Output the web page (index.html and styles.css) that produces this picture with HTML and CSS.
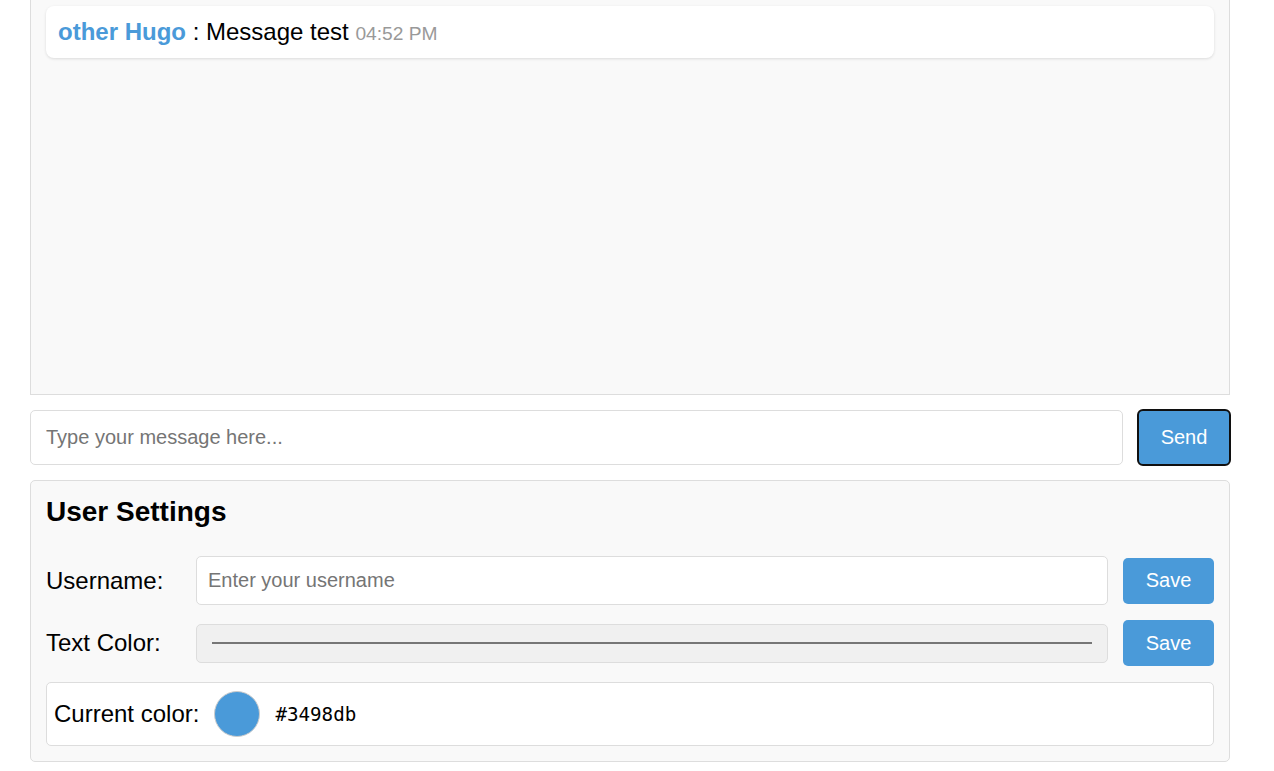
FILE: index.html
```html
<!DOCTYPE html>
<html lang="en">
<head>
<meta charset="utf-8">
<title>Chat</title>
<link rel="stylesheet" href="styles.css">
</head>
<body>
<div class="app">
  <div class="chat-box">
    <div class="message">
      <span class="author">other Hugo</span> : Message test <span class="time">04:52 PM</span>
    </div>
  </div>
  <div class="input-row">
    <input class="msg-input" type="text" placeholder="Type your message here...">
    <button class="send-btn">Send</button>
  </div>
  <div class="settings">
    <h3 class="settings-title">User Settings</h3>
    <div class="setting-row row-user">
      <label class="setting-label">Username:</label>
      <input class="text-field" type="text" placeholder="Enter your username">
      <button class="save-btn">Save</button>
    </div>
    <div class="setting-row row-color">
      <label class="setting-label">Text Color:</label>
      <div class="color-field"><div class="color-line"></div></div>
      <button class="save-btn">Save</button>
    </div>
    <div class="current-color">
      <span class="current-label">Current color:</span>
      <span class="swatch"></span>
      <code class="hex">#3498db</code>
    </div>
  </div>
</div>
</body>
</html>
```

FILE: styles.css
```css
html, body {
  margin: 0;
  padding: 0;
  background: #fff;
}
body {
  font-family: "Liberation Sans", Arial, sans-serif;
  font-size: 24px;
  color: #000;
  overflow: hidden;
}
.app {
  width: 1200px;
  margin: -10px 0 0 30px;
}
.chat-box {
  box-sizing: border-box;
  height: 405px;
  background: #f9f9f9;
  border: 1px solid #ddd;
  padding: 15px;
}
.message {
  background: #fff;
  border-radius: 8px;
  padding: 12px;
  height: 52px;
  box-sizing: border-box;
  line-height: 28px;
  box-shadow: 0 1px 3px rgba(0, 0, 0, 0.12);
}
.author {
  color: #4a9ad9;
  font-weight: bold;
}
.time {
  color: #999;
  font-size: 19.2px;
  line-height: 1;
}
.input-row {
  display: flex;
  align-items: center;
  gap: 14px;
  height: 57px;
  margin: 14px -1px 14px 0;
}
.msg-input {
  flex: 1;
  box-sizing: border-box;
  height: 55px;
  border: 1px solid #ddd;
  border-radius: 5px;
  padding: 0 15px;
  font-family: inherit;
  font-size: 20px;
  background: #fff;
  outline: none;
}
.msg-input::placeholder, .text-field::placeholder {
  color: #757575;
}
.send-btn {
  box-sizing: border-box;
  width: 94px;
  height: 57px;
  border: 2px solid #101010;
  border-radius: 6px;
  background: #4a9ad9;
  color: #fff;
  font-family: inherit;
  font-size: 20px;
  padding: 0;
}
.settings {
  box-sizing: border-box;
  background: #f9f9f9;
  border: 1px solid #ddd;
  border-radius: 5px;
  padding: 15px;
}
.settings-title {
  margin: 0 0 28px;
  font-size: 28px;
  font-weight: bold;
  line-height: 32px;
}
.setting-row {
  display: flex;
  align-items: center;
  gap: 15px;
}
.row-user {
  height: 49px;
  margin-bottom: 15px;
}
.row-color {
  height: 46px;
  margin-bottom: 16px;
}
.setting-label {
  width: 135px;
  flex: none;
}
.text-field {
  flex: 1;
  box-sizing: border-box;
  height: 49px;
  border: 1px solid #ddd;
  border-radius: 5px;
  padding: 0 11px;
  font-family: inherit;
  font-size: 20px;
  background: #fff;
  outline: none;
}
.color-field {
  flex: 1;
  box-sizing: border-box;
  height: 39px;
  border: 1px solid #ddd;
  border-radius: 5px;
  background: #f0f0f0;
  padding: 0 15px;
  display: flex;
  align-items: center;
}
.color-line {
  flex: 1;
  height: 2px;
  background: #767676;
}
.save-btn {
  box-sizing: border-box;
  width: 91px;
  height: 46px;
  border: none;
  border-radius: 5px;
  background: #4a9ad9;
  color: #fff;
  font-family: inherit;
  font-size: 20px;
  padding: 0;
}
.current-color {
  box-sizing: border-box;
  height: 64px;
  display: flex;
  align-items: center;
  gap: 15px;
  padding: 7px;
  background: #fff;
  border: 1px solid #ddd;
  border-radius: 5px;
}
.swatch {
  box-sizing: border-box;
  width: 46px;
  height: 46px;
  border-radius: 50%;
  border: 1px solid #ccc;
  background: #4a9ad9;
}
.hex {
  font-family: "DejaVu Sans Mono", monospace;
  font-size: 19.2px;
}
```
